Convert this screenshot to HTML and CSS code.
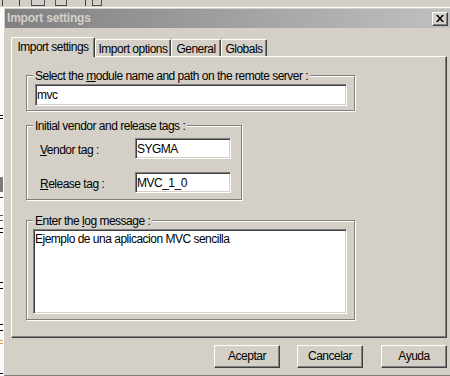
FILE: index.html
```html
<!DOCTYPE html>
<html lang="en">
<head>
    <meta charset="UTF-8">
    <title>Import settings</title>
    <link rel="stylesheet" href="styles.css">
</head>
<body>
    <div class="toolbar-peek">
        <span class="tick t1"></span>
        <span class="tick t2"></span>
        <span class="cup c1"></span>
        <span class="cup c2"></span>
        <span class="tick t3"></span>
        <span class="cup c3"></span>
    </div>
    <div class="desk-row">
        <div class="doc-edge">
            <svg width="3" height="369" viewBox="0 0 3 369">
                <rect x="0" y="108" width="3" height="1" fill="#000"/>
                <rect x="0" y="111" width="3" height="1" fill="#000"/>
                <rect x="0" y="170" width="3" height="15" fill="#7a7a7a"/>
                <rect x="0" y="190" width="3" height="1" fill="#333"/>
                <rect x="0" y="208" width="3" height="1" fill="#555"/>
                <rect x="0" y="213" width="3" height="1" fill="#555"/>
                <rect x="0" y="221" width="3" height="1" fill="#000"/>
                <rect x="0" y="225" width="3" height="1" fill="#000"/>
                <rect x="0" y="275" width="3" height="1" fill="#000"/>
                <rect x="0" y="281" width="3" height="1" fill="#000"/>
                <rect x="0" y="317" width="3" height="1" fill="#000"/>
                <rect x="0" y="323" width="3" height="1" fill="#000"/>
                <rect x="0" y="333" width="3" height="1" fill="#e0a040"/>
                <rect x="0" y="336" width="3" height="1" fill="#e0a040"/>
                <rect x="0" y="366" width="3" height="1" fill="#000"/>
            </svg>
        </div>

        <div class="dialog">
            <div class="titlebar">
                <span class="title">Import settings</span>
                <span class="close-btn">
                    <svg width="8" height="7" viewBox="0 0 8 7">
                        <path d="M0 0h2l2 2.5 2-2.5h2l-3 3.5 3 3.5h-2l-2-2.5-2 2.5h-2l3-3.5z" fill="#000"/>
                    </svg>
                </span>
            </div>

            <div class="dialog-body">
                <div class="tabs">
                    <div class="tab active">Import settings</div>
                    <div class="tab tab-options">Import options</div>
                    <div class="tab tab-general">General</div>
                    <div class="tab tab-globals">Globals</div>
                </div>

                <div class="panel">
                    <div class="group group-module">
                        <div class="group-title">Select the <u>m</u>odule name and path on the remote server :</div>
                        <input class="field" type="text" value="mvc">
                    </div>

                    <div class="group group-tags">
                        <div class="group-title">Initial vendor and release tags :</div>
                        <div class="tag-grid">
                            <label for="vendor"><u>V</u>endor tag :</label>
                            <input class="field" id="vendor" type="text" value="SYGMA">
                            <label for="release"><u>R</u>elease tag :</label>
                            <input class="field" id="release" type="text" value="MVC_1_0">
                        </div>
                    </div>

                    <div class="group group-log">
                        <div class="group-title">Enter the <u>l</u>og message :</div>
                        <textarea class="field log">Ejemplo de una aplicacion MVC sencilla</textarea>
                    </div>
                </div>

                <div class="buttons">
                    <button>Aceptar</button>
                    <button>Cancelar</button>
                    <button>Ayuda</button>
                </div>
            </div>
        </div>
    </div>
</body>
</html>
```

FILE: styles.css
```css
html, body {
    margin: 0;
    height: 376px;
    overflow: hidden;
}
body {
    background-color: #d4d0c8;
    font-family: "Liberation Sans", Arial, sans-serif;
    font-size: 12px;
    letter-spacing: -0.5px;
    line-height: 13px;
    color: #000;
}
u {
    text-decoration: underline;
    text-underline-offset: 1px;
}

/* bits of the window behind the dialog */
.toolbar-peek {
    height: 7px;
    display: flex;
    align-items: flex-start;
}
.tick {
    width: 1px;
    height: 6px;
    background-color: #404040;
}
.cup {
    height: 5px;
    border: 1px solid #505050;
    border-top: none;
}
.t1 { margin-left: 2px; }
.t2 { margin-left: 16px; }
.c1 { width: 12px; margin-left: 11px; }
.c2 { width: 10px; margin-left: 10px; }
.t3 { margin-left: 18px; }
.c3 { width: 8px; margin-left: 6px; }
.desk-row {
    display: flex;
}
.doc-edge {
    width: 3px;
    height: 369px;
    background-color: #fbfbfb;
    flex-shrink: 0;
}
.doc-edge svg {
    display: block;
}

/* dialog window */
.dialog {
    width: 447px;
    height: 366px;
    flex-shrink: 0;
    padding: 1px;
    border: 1px solid;
    border-color: #ffffff #404040 #404040 #ffffff;
    box-shadow: inset -1px -1px #808080;
    display: flex;
    flex-direction: column;
}
.titlebar {
    height: 19px;
    margin-right: 2px;
    background: linear-gradient(to right, #808080, #c0c0c0);
    display: flex;
    align-items: center;
    justify-content: space-between;
    padding: 0 2px;
}
.title {
    color: #d4d0c8;
    font-weight: bold;
    font-size: 12px;
    letter-spacing: -0.2px;
}
.close-btn {
    width: 14px;
    height: 12px;
    background-color: #d4d0c8;
    border: 1px solid;
    border-color: #ffffff #404040 #404040 #ffffff;
    box-shadow: inset -1px -1px #808080;
    display: flex;
    align-items: center;
    justify-content: center;
}
.dialog-body {
    padding: 9px 5px 0 6px;
}

/* tabs */
.tabs {
    display: flex;
    align-items: flex-end;
    height: 19px;
}
.tab {
    box-sizing: border-box;
    height: 17px;
    padding-top: 3px;
    border: 1px solid;
    border-color: #ffffff #404040 transparent #ffffff;
    border-bottom: none;
    border-radius: 2px 2px 0 0;
    box-shadow: inset -1px 0 #808080;
    white-space: nowrap;
    text-align: center;
}
.tab.active {
    position: relative;
    z-index: 1;
    width: 84px;
    height: 20px;
    padding-top: 3px;
    margin-bottom: -1px;
    background-color: #d4d0c8;
}
.tab-options { width: 76px; }
.tab-general { width: 50px; }
.tab-globals { width: 46px; }
.panel {
    height: 262px;
    padding: 18px 0 0 14px;
    border: 1px solid;
    border-color: #ffffff #404040 #404040 #ffffff;
    box-shadow: inset -1px -1px #808080;
}

/* group boxes */
.group {
    border: 1px solid #808080;
    box-shadow: inset 1px 1px #ffffff, 1px 1px #ffffff;
}
.group-title {
    width: fit-content;
    margin-top: -6px;
    padding: 0 2px;
    background-color: #d4d0c8;
    white-space: nowrap;
}
.group-module {
    width: 312px;
    padding: 0 7px 4px 8px;
}
.group-module .group-title {
    margin-left: -2px;
}
.group-module .field {
    display: block;
    width: 312px;
    height: 22px;
    margin-top: 1px;
}
.group-tags {
    width: 201px;
    margin-top: 14px;
    padding: 0 7px 6px 6px;
}
.tag-grid {
    display: grid;
    grid-template-columns: 95px 96px;
    grid-auto-rows: 21px;
    row-gap: 13px;
    align-items: center;
    margin: 5px 0 0 7px;
}
.tag-grid label {
    padding-top: 3px;
}
.tag-grid .field {
    width: 96px;
    height: 21px;
}
.group-log {
    width: 314px;
    margin-top: 20px;
    padding: 0 7px 5px 6px;
}
.group-log .field {
    display: block;
    width: 314px;
    height: 85px;
    margin-top: 1px;
    padding-top: 3px;
    resize: none;
}

/* sunken edit fields */
.field {
    box-sizing: border-box;
    margin: 0;
    padding: 0 1px;
    border: 1px solid;
    border-color: #808080 #ffffff #ffffff #808080;
    box-shadow: inset 1px 1px #404040, inset -1px -1px #d4d0c8;
    background-color: #ffffff;
    font: inherit;
    letter-spacing: inherit;
    color: #000;
    outline: none;
    appearance: none;
    border-radius: 0;
}

/* bottom buttons */
.buttons {
    display: flex;
    justify-content: flex-end;
    gap: 17px;
    margin-top: 7px;
}
.buttons button {
    width: 66px;
    height: 23px;
    padding: 0;
    font: inherit;
    letter-spacing: inherit;
    color: #000;
    background-color: #d4d0c8;
    border: 1px solid;
    border-color: #ffffff #404040 #404040 #ffffff;
    box-shadow: inset -1px -1px #808080;
    border-radius: 0;
}
.buttons button:last-child {
    margin-left: 1px;
}
```
